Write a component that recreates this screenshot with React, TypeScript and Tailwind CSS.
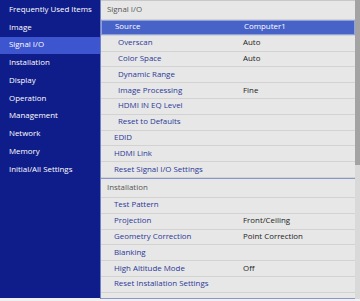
const leftItems = [
  "Frequently Used Items",
  "Image",
  "Signal I/O",
  "Installation",
  "Display",
  "Operation",
  "Management",
  "Network",
  "Memory",
  "Initial/All Settings",
];

type Row = { label: string; value?: string; indent: 1 | 2; active?: boolean };

const signalRows: Row[] = [
  { label: "Source", value: "Computer1", indent: 1, active: true },
  { label: "Overscan", value: "Auto", indent: 2 },
  { label: "Color Space", value: "Auto", indent: 2 },
  { label: "Dynamic Range", indent: 2 },
  { label: "Image Processing", value: "Fine", indent: 2 },
  { label: "HDMI IN EQ Level", indent: 2 },
  { label: "Reset to Defaults", indent: 2 },
  { label: "EDID", indent: 1 },
  { label: "HDMI Link", indent: 1 },
  { label: "Reset Signal I/O Settings", indent: 1 },
];

const installRows: Row[] = [
  { label: "Test Pattern", indent: 1 },
  { label: "Projection", value: "Front/Ceiling", indent: 1 },
  { label: "Geometry Correction", value: "Point Correction", indent: 1 },
  { label: "Blanking", indent: 1 },
  { label: "High Altitude Mode", value: "Off", indent: 1 },
  { label: "Reset Installation Settings", indent: 1 },
];

function MenuRow({ row }: { row: Row }) {
  return (
    <div className="h-[15.8px] border-b border-[#d2d2d2] bg-[#e7e7e7]">
      <div
        className={
          row.active
            ? "flex h-full items-center border border-[#8da0e0] bg-[#4863c8] text-white"
            : "flex h-full items-center text-[#2a3897]"
        }
      >
        <span className={row.indent === 1 ? "w-[142px] pl-[13px]" : "w-[142px] pl-[17px]"}>
          {row.label}
        </span>
        {row.value && (
          <span className={row.active ? "text-white" : "text-[#222]"}>{row.value}</span>
        )}
      </div>
    </div>
  );
}

function SectionHeader({ title }: { title: string }) {
  return (
    <div className="flex h-[19px] items-center border-b border-[#d2d2d2] bg-[#e7e7e7] pl-[6px] text-[#555]">
      {title}
    </div>
  );
}

export default function App() {
  return (
    <div
      className="flex h-[301px] w-[360px] bg-[#f0f0f0] text-[7.9px] font-medium leading-none"
      style={{ fontFamily: '"Open Sans", "Noto Sans", sans-serif' }}
    >
      <div className="flex h-[298px] w-[100px] flex-col bg-[#0f1d8a] pt-[1px] text-white">
        {leftItems.map((item) => (
          <div
            key={item}
            className={
              item === "Signal I/O"
                ? "flex h-[17.75px] items-center bg-[#3d55cf] pl-[9px]"
                : "flex h-[17.75px] items-center pl-[9px]"
            }
          >
            {item}
          </div>
        ))}
      </div>
      <div className="flex h-[299px] flex-1 border-l border-[#7282c4]">
        <div className="flex flex-1 flex-col border-t border-[#c8c8c8]">
          <SectionHeader title="Signal I/O" />
          {signalRows.map((r) => (
            <MenuRow key={r.label} row={r} />
          ))}
          <div className="h-[1px] bg-[#8a97cc]" />
          <SectionHeader title="Installation" />
          {installRows.map((r) => (
            <MenuRow key={r.label} row={r} />
          ))}
          <div className="flex-1 border-b border-[#8a97cc] bg-[#e7e7e7]" />
        </div>
        <div className="flex w-[5px] flex-col bg-[#d9d9d9]">
          <div className="h-[165px] bg-[#a3a3a3]" />
        </div>
      </div>
    </div>
  );
}
